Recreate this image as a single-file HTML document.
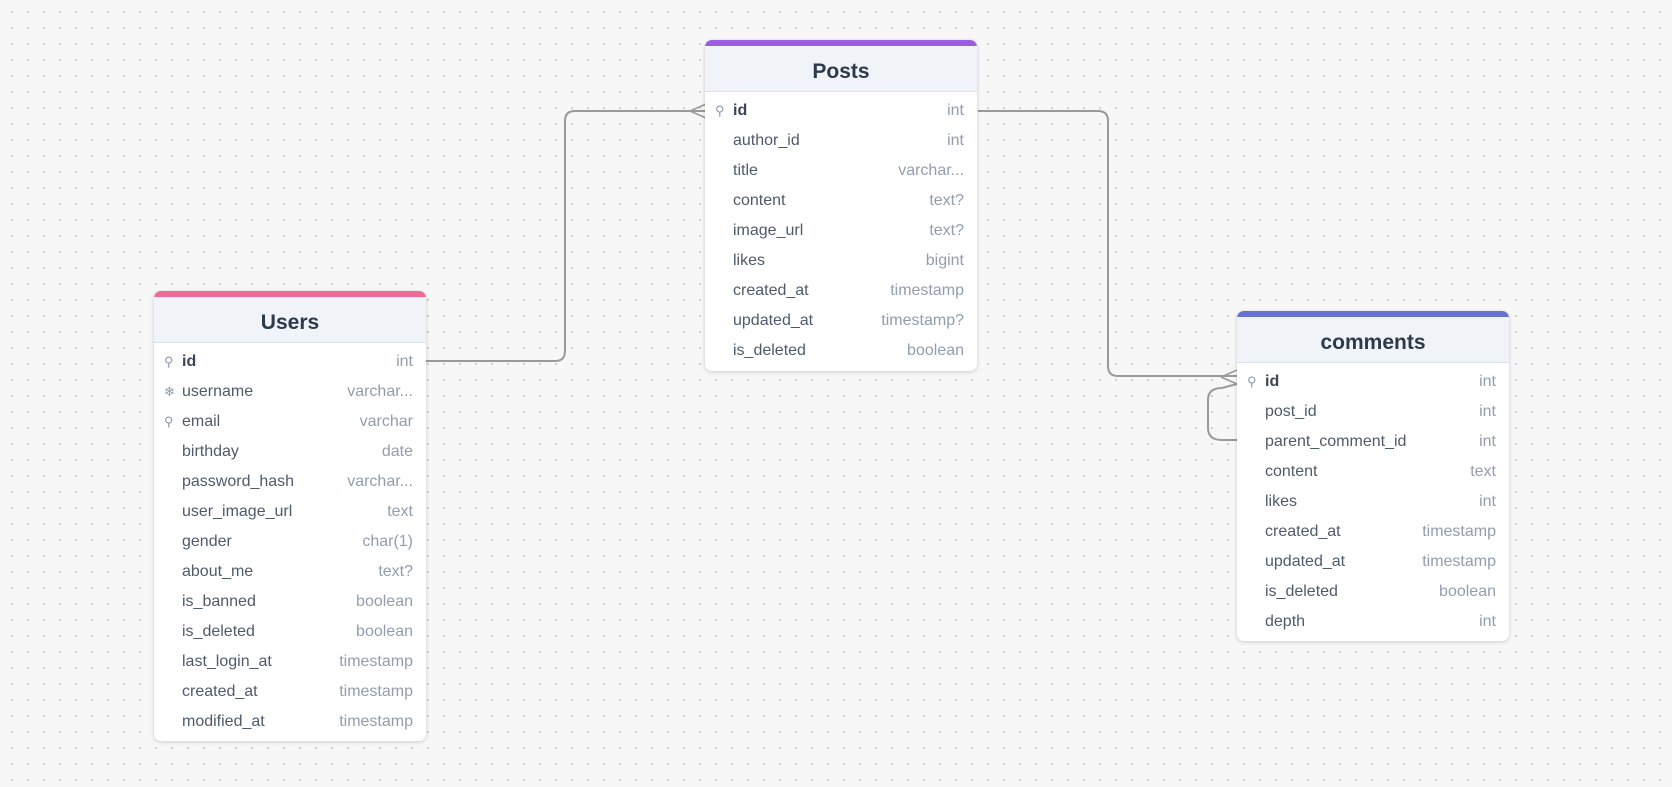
<!DOCTYPE html>
<html><head><meta charset="utf-8"><style>
*{margin:0;padding:0;box-sizing:border-box}
body{width:1672px;height:787px;overflow:hidden;background:#f7f7f7;
background-image:radial-gradient(circle,#c9c9c9 0.9px,transparent 1.2px);background-size:16px 16px;background-position:4px 4px;
font-family:"Liberation Sans",Arial,sans-serif;position:relative}
.card{position:absolute;background:#fff;border-radius:7px;box-shadow:0 1px 4px rgba(0,0,0,.18);overflow:hidden;width:272px}
.bar{height:6px}
.hd{height:46px;background:#f0f3f8;border-bottom:1px solid #dde3ea;text-align:center;line-height:52px;font-size:21px;font-weight:bold;color:#2c3a4b}
.rows{padding-top:4px}
.r{height:30px;line-height:30px;position:relative;font-size:16px;color:#4f5a6b;padding-left:28px}
.r b{color:#3a4556}
.r .t{position:absolute;right:13px;top:0;color:#929daf}
.r .i{position:absolute;left:10px;top:0;width:14px;color:#8e9aae;font-size:13px}
svg.l{position:absolute;left:0;top:0}
</style></head><body>
<svg class="l" width="1672" height="787" fill="none" stroke="#9a9a9a" stroke-width="2">
<path d="M425 361 H555 Q565 361 565 351 V121 Q565 111 575 111 H706"/>
<path d="M690 111 L706 104 M690 111 L706 118" stroke-width="1.6"/>
<path d="M978 111 H1098 Q1108 111 1108 121 V366 Q1108 376 1118 376 H1237"/>
<path d="M1221 377 L1237 370 M1221 377 L1237 384" stroke-width="1.6"/>
<path d="M1237 384 L1222 388 Q1208 388 1208 400 V428 Q1208 440 1222 440 H1237"/>
</svg>

<div class="card" style="left:154px;top:291px;height:450px">
<div class="bar" style="background:#f06a99"></div><div class="hd">Users</div>
<div class="rows">
<div class="r"><span class="i">&#x26B2;</span><b>id</b><span class="t">int</span></div>
<div class="r"><span class="i">&#x2744;</span>username<span class="t">varchar...</span></div>
<div class="r"><span class="i">&#x26B2;</span>email<span class="t">varchar</span></div>
<div class="r">birthday<span class="t">date</span></div>
<div class="r">password_hash<span class="t">varchar...</span></div>
<div class="r">user_image_url<span class="t">text</span></div>
<div class="r">gender<span class="t">char(1)</span></div>
<div class="r">about_me<span class="t">text?</span></div>
<div class="r">is_banned<span class="t">boolean</span></div>
<div class="r">is_deleted<span class="t">boolean</span></div>
<div class="r">last_login_at<span class="t">timestamp</span></div>
<div class="r">created_at<span class="t">timestamp</span></div>
<div class="r">modified_at<span class="t">timestamp</span></div>
</div></div>

<div class="card" style="left:705px;top:40px;height:331px">
<div class="bar" style="background:#9b5de0"></div><div class="hd">Posts</div>
<div class="rows">
<div class="r"><span class="i">&#x26B2;</span><b>id</b><span class="t">int</span></div>
<div class="r">author_id<span class="t">int</span></div>
<div class="r">title<span class="t">varchar...</span></div>
<div class="r">content<span class="t">text?</span></div>
<div class="r">image_url<span class="t">text?</span></div>
<div class="r">likes<span class="t">bigint</span></div>
<div class="r">created_at<span class="t">timestamp</span></div>
<div class="r">updated_at<span class="t">timestamp?</span></div>
<div class="r">is_deleted<span class="t">boolean</span></div>
</div></div>

<div class="card" style="left:1237px;top:311px;height:330px">
<div class="bar" style="background:#6773d0"></div><div class="hd">comments</div>
<div class="rows">
<div class="r"><span class="i">&#x26B2;</span><b>id</b><span class="t">int</span></div>
<div class="r">post_id<span class="t">int</span></div>
<div class="r">parent_comment_id<span class="t">int</span></div>
<div class="r">content<span class="t">text</span></div>
<div class="r">likes<span class="t">int</span></div>
<div class="r">created_at<span class="t">timestamp</span></div>
<div class="r">updated_at<span class="t">timestamp</span></div>
<div class="r">is_deleted<span class="t">boolean</span></div>
<div class="r">depth<span class="t">int</span></div>
</div></div>
</body></html>
